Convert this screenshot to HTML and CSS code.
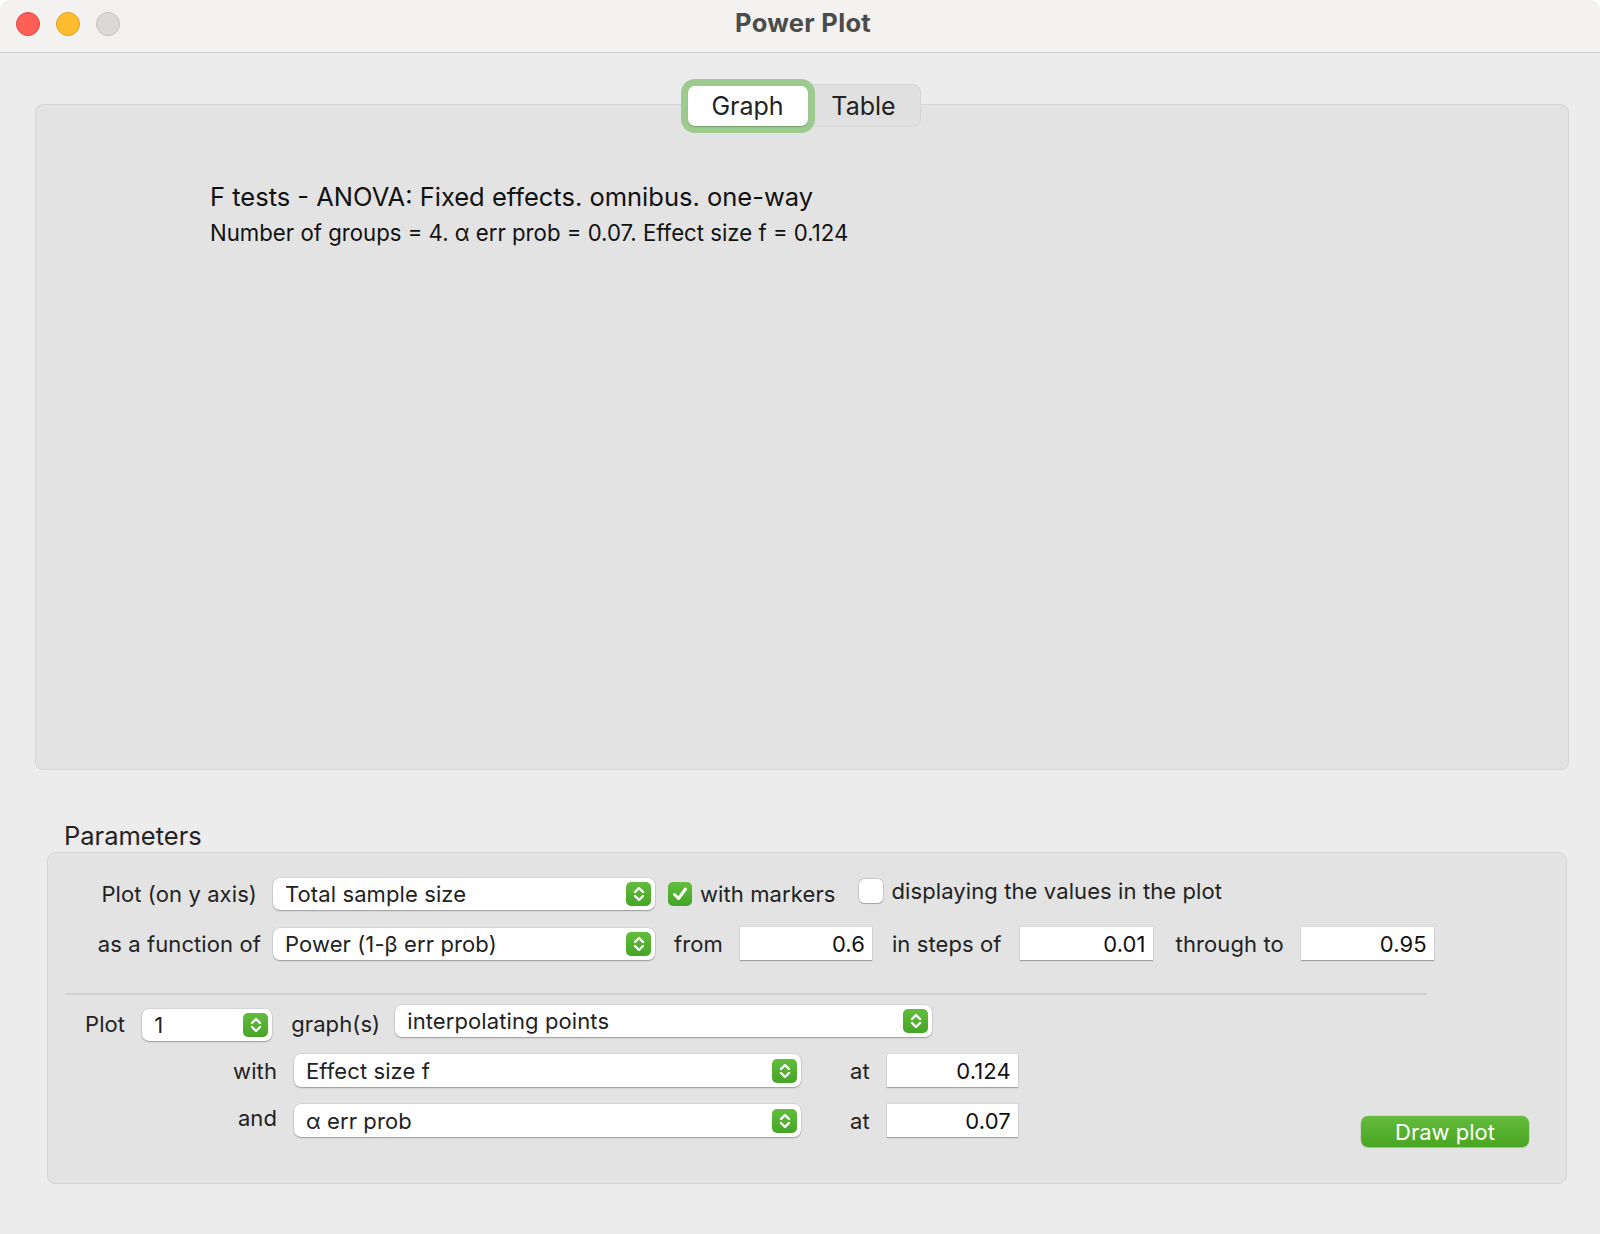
FILE: index.html
```html
<!DOCTYPE html>
<html lang="en">
<head>
<meta charset="utf-8">
<title>Power Plot</title>
<link rel="stylesheet" href="styles.css">
</head>
<body>
<div class="window">
  <header class="titlebar">
    <div class="lights">
      <span class="light red"></span>
      <span class="light yellow"></span>
      <span class="light gray"></span>
    </div>
    <div class="title">Power Plot</div>
    <div></div>
  </header>
  <main class="content">
    <section class="tabview">
      <div class="segmented">
        <div class="seg seg-active">Graph</div>
        <div class="seg seg-table">Table</div>
      </div>
      <div class="tabpanel">
        <div class="plot-title">F tests - ANOVA: Fixed effects. omnibus. one-way</div>
        <div class="plot-sub">Number of groups = 4. α err prob = 0.07. Effect size f = 0.124</div>
      </div>
    </section>
    <section class="params">
      <div class="params-label">Parameters</div>
      <div class="params-box">
        <div class="row row1">
          <div class="lbl lbl-main">Plot (on y axis)</div>
          <div class="select sel-main"><span>Total sample size</span><span class="stepper"><svg viewBox="0 0 24 24" width="24" height="24"><path d="M8 10 L12 6 L16 10 M8 14 L12 18 L16 14" fill="none" stroke="#fff" stroke-width="2.4" stroke-linecap="round" stroke-linejoin="round"/></svg></span></div>
          <span class="check checked"><svg viewBox="0 0 24 24" width="24" height="24"><path d="M6.5 12.5 L10.5 16.5 L17.5 7" fill="none" stroke="#fff" stroke-width="3" stroke-linecap="round" stroke-linejoin="round"/></svg></span>
          <span class="txt check-lbl">with markers</span>
          <span class="check unchecked"></span>
          <span class="txt check-lbl2">displaying the values in the plot</span>
        </div>
        <div class="row row2">
          <div class="lbl lbl-main lbl-fn">as a function of</div>
          <div class="select sel-main"><span>Power (1-β err prob)</span><span class="stepper"><svg viewBox="0 0 24 24" width="24" height="24"><path d="M8 10 L12 6 L16 10 M8 14 L12 18 L16 14" fill="none" stroke="#fff" stroke-width="2.4" stroke-linecap="round" stroke-linejoin="round"/></svg></span></div>
          <span class="txt t-from">from</span>
          <div class="field f-from">0.6</div>
          <span class="txt t-steps">in steps of</span>
          <div class="field f-steps">0.01</div>
          <span class="txt t-through">through to</span>
          <div class="field f-through">0.95</div>
        </div>
        <div class="separator"></div>
        <div class="row row3">
          <span class="txt t-plot">Plot</span>
          <div class="select sel-count"><span>1</span><span class="stepper"><svg viewBox="0 0 24 24" width="24" height="24"><path d="M8 10 L12 6 L16 10 M8 14 L12 18 L16 14" fill="none" stroke="#fff" stroke-width="2.4" stroke-linecap="round" stroke-linejoin="round"/></svg></span></div>
          <span class="txt t-graphs">graph(s)</span>
          <div class="select sel-interp"><span>interpolating points</span><span class="stepper"><svg viewBox="0 0 24 24" width="24" height="24"><path d="M8 10 L12 6 L16 10 M8 14 L12 18 L16 14" fill="none" stroke="#fff" stroke-width="2.4" stroke-linecap="round" stroke-linejoin="round"/></svg></span></div>
        </div>
        <div class="row row4">
          <div class="lbl lbl-sub">with</div>
          <div class="select sel-sub"><span>Effect size f</span><span class="stepper"><svg viewBox="0 0 24 24" width="24" height="24"><path d="M8 10 L12 6 L16 10 M8 14 L12 18 L16 14" fill="none" stroke="#fff" stroke-width="2.4" stroke-linecap="round" stroke-linejoin="round"/></svg></span></div>
          <span class="txt t-at">at</span>
          <div class="field f-at">0.124</div>
        </div>
        <div class="row row5">
          <div class="lbl lbl-sub lbl-and">and</div>
          <div class="select sel-sub"><span>α err prob</span><span class="stepper"><svg viewBox="0 0 24 24" width="24" height="24"><path d="M8 10 L12 6 L16 10 M8 14 L12 18 L16 14" fill="none" stroke="#fff" stroke-width="2.4" stroke-linecap="round" stroke-linejoin="round"/></svg></span></div>
          <span class="txt t-at">at</span>
          <div class="field f-at">0.07</div>
          <button class="draw-btn">Draw plot</button>
        </div>
      </div>
    </section>
  </main>
</div>
</body>
</html>
```
FILE: styles.css
```css
* { box-sizing: border-box; }
html { background: #ffffff; }
body {
  margin: 0;
  font-family: Inter, "Noto Sans", "Liberation Sans", sans-serif;
  color: #222222;
}
.window {
  width: 1600px;
  height: 1234px;
  background: #ececec;
  border-radius: 11px 11px 0 0;
  overflow: hidden;
}
.titlebar {
  height: 53px;
  background: #f3f2f0;
  border-bottom: 1px solid #cdcdcd;
  display: grid;
  grid-template-columns: 1fr auto 1fr;
  align-items: start;
}
.lights {
  display: flex;
  gap: 16px;
  padding-left: 16px;
  padding-top: 12px;
}
.light {
  width: 24px;
  height: 24px;
  border-radius: 50%;
  display: block;
}
.red { background: #fe5f57; border: 1px solid #e2463f; }
.yellow { background: #febc2e; border: 1px solid #de9f25; }
.gray { background: #dcdad8; border: 1px solid #c4c2c0; }
.title {
  font-weight: 700;
  font-size: 25.5px;
  line-height: 30px;
  padding-top: 8px;
  color: #4b4b4b;
  letter-spacing: 0.3px;
  padding-left: 6px;
}
.content { display: block; }
.tabview {
  margin: 31px 31px 0 35px;
}
.segmented {
  position: relative;
  z-index: 1;
  width: 235px;
  height: 43px;
  margin: 0 auto;
  left: 1px;
  display: flex;
  align-items: center;
  background: #e0e0e0;
  border: 1px solid #d5d5d5;
  border-radius: 8px;
}
.seg {
  font-size: 25px;
  color: #222;
  display: flex;
  align-items: center;
  justify-content: center;
}
.seg-active {
  width: 120px;
  height: 40px;
  background: #ffffff;
  border-radius: 7px;
  box-shadow: 0 1px 1px rgba(0,0,0,0.25), 0 0 0 7px #9dca8e;
  margin-left: 1px;
}
.seg-table {
  flex: 1;
  padding-left: 0;
}
.tabpanel {
  margin-top: -23px;
  height: 666px;
  background: #e3e3e3;
  border: 1px solid #d6d6d6;
  border-radius: 8px;
  padding: 77px 0 0 174px;
}
.plot-title {
  font-size: 25.5px;
  line-height: 30px;
  color: #111;
}
.plot-sub {
  font-size: 22.2px;
  line-height: 26px;
  margin-top: 8px;
  color: #111;
}
.params-label {
  font-size: 25.5px;
  line-height: 30px;
  margin: 51px 0 0 64px;
  color: #222;
}
.params-box {
  margin: 1px 33px 0 47px;
  height: 332px;
  background: #e3e3e3;
  border: 1px solid #d6d6d6;
  border-radius: 8px;
  padding-top: 25px;
}
.row {
  display: flex;
  align-items: center;
  font-size: 22px;
  letter-spacing: 0.1px;
}
.row1 { height: 32px; }
.row2 { height: 33px; margin-top: 17px; }
.row3 { height: 36px; margin-top: 10px; align-items: flex-start; }
.row4 { height: 33px; margin-top: 13px; }
.row5 { height: 33px; margin-top: 17px; }
.lbl { text-align: right; }
.lbl-main { width: 209px; margin-right: 2px; }
.lbl-fn { width: 213px; margin-right: -2px; }
.lbl-sub { width: 229px; }
.lbl-and { position: relative; top: -3px; }
.select {
  height: 32px;
  background: #ffffff;
  border-radius: 7px;
  box-shadow: 0 0 0 0.5px rgba(0,0,0,0.12), 0 1px 1.5px rgba(0,0,0,0.28);
  display: flex;
  align-items: center;
  justify-content: space-between;
  padding: 0 4px 0 12px;
  color: #222;
}
.stepper {
  width: 25px;
  height: 24px;
  border-radius: 5px;
  background: linear-gradient(#62bd3d, #45a526);
  display: flex;
  align-items: center;
  justify-content: center;
}
.stepper svg { display: block; }
.sel-main { width: 382px; margin-left: 14px; }
.sel-count { width: 130px; margin-left: 17px; margin-top: 4px; }
.sel-interp { width: 537px; margin-left: 15px; }
.sel-sub { width: 507px; margin-left: 17px; height: 33px; }
.check {
  width: 24px;
  height: 24px;
  border-radius: 5px;
  display: flex;
  align-items: center;
  justify-content: center;
}
.checked {
  margin-left: 13px;
  background: linear-gradient(#62bd3d, #45a526);
}
.unchecked {
  margin-left: 24px;
  background: #ffffff;
  box-shadow: 0 0 0 0.5px rgba(0,0,0,0.2), 0 0.5px 1px rgba(0,0,0,0.2);
  position: relative;
  top: -3px;
}
.txt { white-space: nowrap; }
.check-lbl { margin-left: 8px; }
.check-lbl2 { margin-left: 8px; position: relative; top: -3px; }
.field {
  height: 33px;
  background: #ffffff;
  box-shadow: 0 0 0 0.5px rgba(0,0,0,0.08), 0 1px 1px rgba(0,0,0,0.25);
  display: flex;
  align-items: center;
  justify-content: flex-end;
  padding-right: 7px;
  color: #111;
}
.t-from { margin-left: 19px; }
.f-from { width: 132px; margin-left: 17px; }
.t-steps { margin-left: 20px; }
.f-steps { width: 133px; margin-left: 18px; }
.t-through { margin-left: 23px; }
.f-through { width: 133px; margin-left: 17px; }
.separator {
  height: 2px;
  background: #d2d2d2;
  width: 1361px;
  margin: 33px 0 0 18px;
}
.t-plot { margin-left: 37px; margin-top: 6px; }
.t-graphs { margin-left: 19px; margin-top: 6px; }
.t-at { margin-left: 49px; }
.f-at { width: 131px; margin-left: 17px; }
.draw-btn {
  margin-left: auto;
  margin-right: 37px;
  margin-top: 22px;
  width: 168px;
  height: 31px;
  border: none;
  border-radius: 7px;
  background: linear-gradient(#65bb3c, #48a622);
  box-shadow: 0 0 0 0.5px rgba(0,0,0,0.12), 0 1px 1px rgba(0,0,0,0.15);
  color: #ffffff;
  font-family: Inter, "Noto Sans", "Liberation Sans", sans-serif;
  font-size: 22px;
  padding: 0;
}
```
